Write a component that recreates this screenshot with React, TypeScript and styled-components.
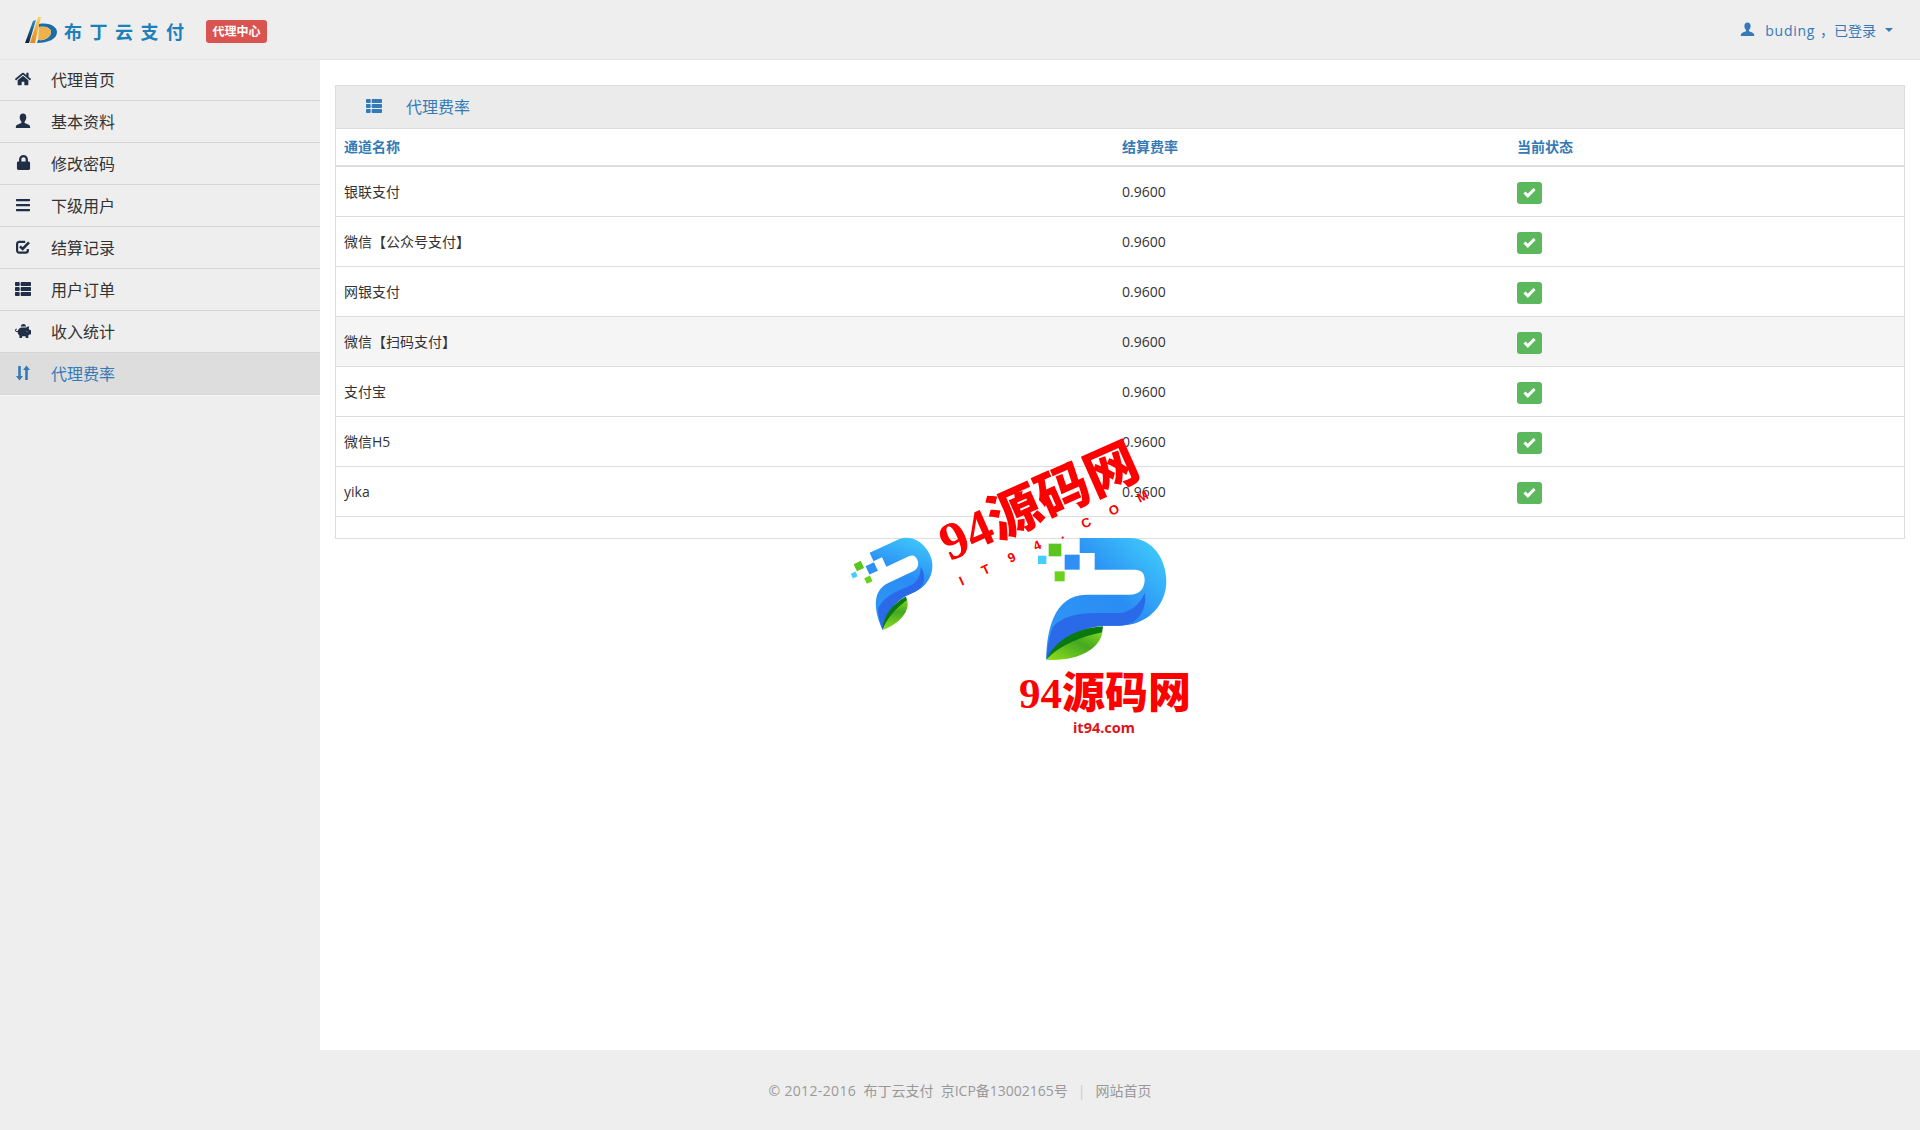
import styled, { createGlobalStyle } from "styled-components";
import { FaBars, FaHome, FaLock, FaPiggyBank, FaThList } from "react-icons/fa";
import type { ReactNode } from "react";

const FONT = `"Open Sans", "Noto Sans CJK SC", sans-serif`;

const GlobalStyle = createGlobalStyle`
	html, body {
		margin: 0;
		padding: 0;
		background: #fff;
	}
	body {
		font-family: ${FONT};
		font-size: 14px;
		color: #333;
	}
	* {
		box-sizing: border-box;
	}
`;

function UserIcon({ size = 16 }: { size?: number }) {
	return (
		<svg width={size} height={size} viewBox="0 0 16 16" fill="currentColor">
			<path d="M8 0.5C5.900 0.500 4.700 2 4.700 4.200c0 1.800.8 3.500 1.700 4.400v1.300c-1.600.7-4.400 1.600-5.100 2.600-.4.600-.5 2-.5 2.500h14.400c0-.5-.1-1.900-.5-2.500-.7-1-3.500-1.900-5.100-2.600V8.600c.9-.9 1.700-2.600 1.700-4.400C11.300 2 10.100.5 8 .5z" />
		</svg>
	);
}

function SortIcon() {
	return (
		<svg width="16" height="16" viewBox="0 0 16 16" fill="currentColor">
			<path d="M3.200 1h2.600v10H8l-3.500 4.500L1 11h2.200zM10.200 15h2.600V5H15L11.500.5 8 5h2.200z" />
		</svg>
	);
}

function CheckSquareIcon() {
	return (
		<svg width="16" height="16" viewBox="0 0 16 16" fill="none" stroke="currentColor" strokeWidth="2.200">
			<path d="M12.800 10v1.500c0 1.300-.8 2.100-2.100 2.100H4.200c-1.300 0-2.100-.8-2.100-2.100V5c0-1.300.8-2.100 2.100-2.100h6" />
			<path d="M5 7.300l2.700 2.700L14 3.300" strokeWidth="2.600" />
		</svg>
	);
}

function OkIcon() {
	return (
		<svg width="13" height="11" viewBox="0 0 13 11" fill="none" stroke="currentColor" strokeWidth="3">
			<path d="M1.500 5.500l3.300 3.300 6.800-6.800" />
		</svg>
	);
}

function LogoMark() {
	return (
		<svg width="34" height="27" viewBox="0 0 34 27">
			<defs>
				<linearGradient id="logoGold" x1="0" y1="0" x2="0" y2="1">
					<stop offset="0" stopColor="#f9d45c" />
					<stop offset="1" stopColor="#e8861c" />
				</linearGradient>
				<linearGradient id="logoDark" x1="0" y1="0" x2="0" y2="1">
					<stop offset="0" stopColor="#2b8fd0" />
					<stop offset="1" stopColor="#0c1f3c" />
				</linearGradient>
			</defs>
			<path d="M9 4L12 3 5 26 1 26z" fill="url(#logoDark)" />
			<path d="M14 0L17 0 11 26 6 26z" fill="url(#logoGold)" />
			<path d="M15 7C26 5 33 10 33 15 33 22 24 26 13 26L14 23C21 24 27 20 27 15 27 11 22 9 15 10z" fill="#1c6cab" />
			<path d="M15 10C22 9 27 11 27 15 27 20 21 24 14 23z" fill="#eeb24c" />
		</svg>
	);
}

function PMark({ idx }: { idx: string }) {
	return (
		<svg width="100%" height="100%" viewBox="640 340 420 390">
			<defs>
				<linearGradient id={`${idx}b`} x1="1" y1="0" x2="0" y2="1">
					<stop offset="0" stopColor="#42d4fc" />
					<stop offset="0.45" stopColor="#2a8cf4" />
					<stop offset="1" stopColor="#2f9af6" />
				</linearGradient>
				<linearGradient id={`${idx}g`} x1="0" y1="1" x2="1" y2="0">
					<stop offset="0" stopColor="#8fe01c" />
					<stop offset="0.6" stopColor="#45a820" />
					<stop offset="1" stopColor="#7fd81e" />
				</linearGradient>
			</defs>
			<rect x="687" y="372" width="38" height="38" fill="#5cc41e" />
			<rect x="735" y="405" width="45" height="45" fill="#2f8ff5" />
			<rect x="655" y="408" width="25" height="25" fill="#45cdfb" />
			<rect x="705" y="455" width="30" height="30" fill="#69d21c" />
			<path d="M780 355H930C1000 355 1040 420 1040 485 1040 560 980 618 900 618H850C770 625 705 660 680 720 680 640 700 525 800 525H930C960 525 975 505 975 480 975 460 965 450 945 450H825V400H780Z" fill={`url(#${idx}b)`} />
			<path d="M700 622C725 590 780 578 840 580H905C935 575 960 555 975 520 985 570 950 618 900 618H850C790 623 730 650 680 720 682 685 688 650 700 622Z" fill="#2a6ae8" />
			<path d="M850 620C780 625 710 655 680 720 720 680 780 655 847 640Z" fill="#0a7a10" />
			<path d="M680 720C720 675 790 650 848 638 840 690 770 727 680 720Z" fill={`url(#${idx}g)`} />
		</svg>
	);
}

const NAV_ITEMS: { label: string; icon: ReactNode; active?: boolean }[] = [
	{ label: "代理首页", icon: <FaHome size={18} /> },
	{ label: "基本资料", icon: <UserIcon /> },
	{ label: "修改密码", icon: <FaLock size={15} /> },
	{ label: "下级用户", icon: <FaBars size={16} /> },
	{ label: "结算记录", icon: <CheckSquareIcon /> },
	{ label: "用户订单", icon: <FaThList size={16} /> },
	{ label: "收入统计", icon: <FaPiggyBank size={18} /> },
	{ label: "代理费率", icon: <SortIcon />, active: true },
];

const CHANNELS = ["银联支付", "微信【公众号支付】", "网银支付", "微信【扫码支付】", "支付宝", "微信H5", "yika"];

export default function App() {
	return (
		<Page>
			<GlobalStyle />
			<TopBar>
				<Brand>
					<LogoMark />
					<BrandName>布丁云支付</BrandName>
					<Badge>代理中心</Badge>
				</Brand>
				<UserBox>
					<UserIcon size={15} />
					<UserName>
						<b>buding</b>，已登录
					</UserName>
					<Caret />
				</UserBox>
			</TopBar>
			<Middle>
				<Sidebar>
					{NAV_ITEMS.map((item) => (
						<NavItem key={item.label} $active={item.active}>
							<NavIcon $active={item.active}>{item.icon}</NavIcon>
							<span>{item.label}</span>
						</NavItem>
					))}
				</Sidebar>
				<Main>
					<Panel>
						<PanelHead>
							<FaThList size={16} />
							<span>代理费率</span>
						</PanelHead>
						<Table>
							<colgroup>
								<col width="778" />
								<col width="395" />
								<col width="395" />
							</colgroup>
							<thead>
								<tr>
									<Th>通道名称</Th>
									<Th>结算费率</Th>
									<Th>当前状态</Th>
								</tr>
							</thead>
							<tbody>
								{CHANNELS.map((name, i) => (
									<Row key={name} $hover={i === 3}>
										<Td>{name}</Td>
										<Td>0.9600</Td>
										<Td>
											<StatusBox>
												<OkIcon />
											</StatusBox>
										</Td>
									</Row>
								))}
							</tbody>
						</Table>
						<PanelFoot />
					</Panel>
				</Main>
			</Middle>
			<Footer>
				<span>
					<Copyright>© 2012-2016</Copyright>&nbsp;&nbsp;布丁云支付&nbsp;&nbsp;京ICP备13002165号
				</span>
				<FooterSep>|</FooterSep>
				<span>网站首页</span>
			</Footer>
			<SmallMark>
				<PMark idx="s" />
			</SmallMark>
			<BigMark>
				<PMark idx="l" />
			</BigMark>
			<SlantTitle>94源码网</SlantTitle>
			<SlantSub>IT94.COM</SlantSub>
			<MarkTitle>94源码网</MarkTitle>
			<MarkSub>it94.com</MarkSub>
		</Page>
	);
}

const Page = styled.div`
	position: relative;
	display: flex;
	flex-direction: column;
	width: 1920px;
	height: 1130px;
	overflow: hidden;
	background: #eee;
`;

const TopBar = styled.header`
	display: flex;
	justify-content: space-between;
	align-items: center;
	height: 60px;
	padding: 0 27px 0 24px;
	background: #eee;
	border-bottom: 1px solid #e4e4e4;
`;

const Brand = styled.div`
	display: flex;
	align-items: center;
	margin-top: 2px;
`;

const BrandName = styled.span`
	margin-left: 6px;
	width: 128px;
	font-size: 18px;
	font-weight: 700;
	letter-spacing: 7.500px;
	white-space: nowrap;
	color: #1d80b8;
`;

const Badge = styled.span`
	display: flex;
	justify-content: center;
	align-items: center;
	width: 61px;
	height: 23px;
	margin-left: 14px;
	margin-top: 1px;
	border-radius: 3px;
	background: #d9534f;
	color: #fff;
	font-size: 12px;
	font-weight: 700;
`;

const UserBox = styled.div`
	display: flex;
	align-items: center;
	color: #337ab7;
`;

const UserName = styled.span`
	margin-left: 10px;
	font-size: 14px;

	& > b {
		margin-right: 5px;
		font-weight: 400;
		letter-spacing: 0.700px;
	}
`;

const Caret = styled.i`
	width: 0;
	height: 0;
	margin-left: 9px;
	border-top: 4px solid #337ab7;
	border-left: 4px solid transparent;
	border-right: 4px solid transparent;
`;

const Middle = styled.div`
	display: flex;
	flex: 1;
`;

const Sidebar = styled.nav`
	width: 320px;
	background: #eee;
`;

const NavItem = styled.div<{ $active?: boolean }>`
	display: flex;
	align-items: center;
	height: 42px;
	padding-bottom: 2px;
	font-size: 16px;
	color: ${(p) => (p.$active ? "#337ab7" : "#333")};
	background: ${(p) => (p.$active ? "#ddd" : "#eee")};
	border-bottom: 1px solid #d5d5d5;
	box-shadow: inset 0 -1px 0 ${(p) => (p.$active ? "#ddd" : "#eee")}, 0 1px 0 #f8f8f8;

	&:first-child {
		height: 41px;
		padding-bottom: 3px;
	}
`;

const NavIcon = styled.span<{ $active?: boolean }>`
	display: flex;
	justify-content: center;
	align-items: center;
	width: 16px;
	height: 16px;
	margin-left: 15px;
	margin-right: 20px;
	color: ${(p) => (p.$active ? "#337ab7" : "#1f2f46")};
`;

const Main = styled.main`
	flex: 1;
	padding: 25px 15px 0;
	background: #fff;
`;

const Panel = styled.section`
	width: 1570px;
	background: #fff;
	border: 1px solid #ddd;
`;

const PanelHead = styled.div`
	display: flex;
	align-items: center;
	height: 43px;
	padding-left: 30px;
	padding-bottom: 2px;
	background: #ebebeb;
	border-bottom: 1px solid #ddd;
	color: #337ab7;
	font-size: 16px;

	& > span {
		margin-left: 24px;
	}
`;

const Table = styled.table`
	width: 100%;
	table-layout: fixed;
	border-collapse: collapse;
`;

const Th = styled.th`
	height: 37px;
	padding: 0 8px 2px;
	text-align: left;
	font-size: 14px;
	font-weight: 700;
	color: #337ab7;
	border-bottom: 2px solid #ddd;
`;

const Row = styled.tr<{ $hover?: boolean }>`
	background: ${(p) => (p.$hover ? "#f5f5f5" : "#fff")};
`;

const Td = styled.td`
	height: 50px;
	padding: 0 8px;
	font-size: 14px;
	color: #333;
	border-bottom: 1px solid #ddd;
`;

const StatusBox = styled.span`
	display: flex;
	justify-content: center;
	align-items: center;
	width: 25px;
	height: 22px;
	margin-top: 3px;
	border-radius: 3px;
	background: #5cb85c;
	color: #fff;
`;

const PanelFoot = styled.div`
	height: 21px;
`;

const Footer = styled.footer`
	display: flex;
	justify-content: center;
	align-items: center;
	height: 80px;
	background: #eee;
	color: #999;
	font-size: 14px;
`;

const Copyright = styled.span`
	letter-spacing: 0.350px;
`;

const FooterSep = styled.span`
	margin: 0 10px;
	color: #ccc;
`;

const SmallMark = styled.div`
	position: absolute;
	left: 855px;
	top: 540px;
	width: 87px;
	height: 81px;
	transform: rotate(-25deg);
`;

const BigMark = styled.div`
	position: absolute;
	left: 1033px;
	top: 533px;
	width: 140px;
	height: 130px;
`;

const SlantTitle = styled.div`
	position: absolute;
	left: 933px;
	top: 472px;
	font-family: "Liberation Serif", "Noto Sans CJK SC", serif;
	font-size: 53px;
	font-weight: 900;
	line-height: 60px;
	white-space: nowrap;
	color: #f00;
	transform: rotate(-24deg);
`;

const SlantSub = styled.div`
	position: absolute;
	left: 960px;
	top: 574px;
	font-family: "Liberation Sans", sans-serif;
	font-size: 13px;
	font-weight: 700;
	letter-spacing: 21px;
	line-height: 16px;
	white-space: nowrap;
	color: #f00;
	transform: rotate(-25deg);
	transform-origin: left center;
`;

const MarkTitle = styled.div`
	position: absolute;
	left: 1019px;
	top: 669px;
	font-family: "Liberation Serif", "Noto Sans CJK SC", serif;
	font-size: 43px;
	font-weight: 900;
	line-height: 50px;
	white-space: nowrap;
	color: #f00;
`;

const MarkSub = styled.div`
	position: absolute;
	left: 1073px;
	top: 718px;
	font-family: "Noto Sans", sans-serif;
	font-size: 14.500px;
	font-weight: 700;
	line-height: 18px;
	white-space: nowrap;
	color: #e0141c;
`;
